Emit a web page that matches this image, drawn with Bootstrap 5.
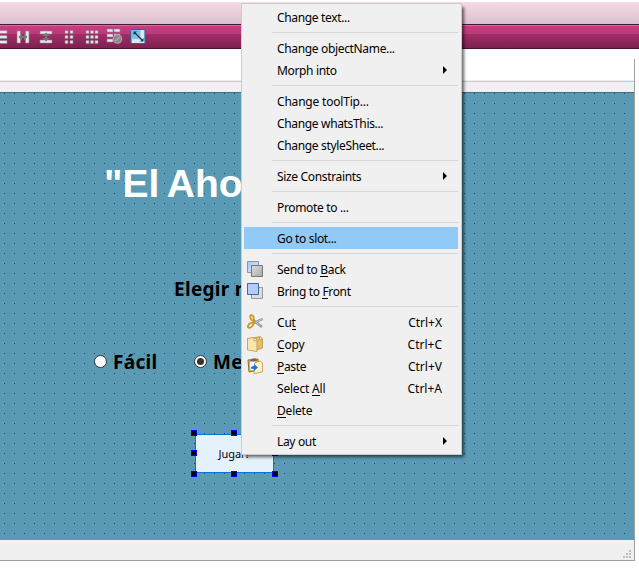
<!DOCTYPE html>
<html lang="es">
<head>
<meta charset="utf-8">
<title>Designer</title>
<link href="https://cdn.jsdelivr.net/npm/bootstrap@5.3.0/dist/css/bootstrap.min.css" rel="stylesheet">
<style>
body{width:639px;height:569px;background:#fff;font-family:"Noto Sans","Open Sans",sans-serif;color:#000}
.titlestrip{height:22px;margin-top:2px;background:linear-gradient(#f8d9e8,#d9c0cc)}
.toolstrip{height:25px;border-top:1px solid #431a30;border-bottom:1px solid #4c1232;background:linear-gradient(#d66ba1 0,#d66ba1 1px,#ca3c80 1px,#b83b79 9px,#a22e69 9px,#7e2150 100%)}
.toolstrip svg{display:block}
.mdi{width:635px;height:502px;margin-top:10px;border-right:1px solid #a0a0a0;border-bottom:1px solid #a0a0a0}
.doc-head{height:12px;margin-top:21px;background:linear-gradient(#f0f0f0 0 1px,#99d9f5 1px 2px,#f0f0f0 2px)}
.form-canvas{height:448px;border-top:1px solid #3c7186;background:#5a9ab4;overflow:hidden}
.status{height:20px;background:#f0f0f0}
.w{position:absolute;line-height:1;white-space:nowrap}
.big-title{left:104px;top:71px;font:bold 39px/1 "Liberation Sans",sans-serif;color:#fff;word-spacing:-2px}
.pick{left:174px;top:187px;font-size:19px;font-weight:700;letter-spacing:.3px}
.opt{top:260px;font-size:19px;font-weight:700;letter-spacing:.3px}
.dot{width:13px;height:13px;border-radius:50%;background:#fff;border:1px solid #333;top:262px}
.dot.on::after{content:"";position:absolute;inset:2px;border-radius:50%;background:#333}
.play{left:195px;top:341px;width:79px;height:39px;background:#e5f1fb;border:1px solid #0078d7;font-size:11px;padding-right:2px}
.handle{position:absolute;width:6px;height:6px;background:#000;border:1px solid #0000e8}
.ctx{position:absolute;left:241px;top:3px;width:221px;height:452px;background:#f0f0f0;border:1px solid #ccc;padding:2px 3px 2px 2px;box-shadow:3px 3px 3px -1px rgba(0,0,0,.6);font-size:12px}
.item{height:22px;line-height:24px;padding:0 16px 0 33px;position:relative;white-space:pre}
.item.hot{background:#91c9f7}
.item>svg{position:absolute;left:3px;top:3px}
.item>span:first-of-type{letter-spacing:-.34px}
.item .loose:first-of-type{letter-spacing:-.2px}
.item u{text-decoration:none;display:inline-block;position:relative;line-height:inherit}
.item u::after{content:"";position:absolute;left:0;right:0;top:18px;height:1px;background:#000}
.rule{height:9px;margin-left:28px;background:linear-gradient(#d7d7d7,#d7d7d7) 0 4px/100% 1px no-repeat}
.arrow{position:absolute;left:199px;top:7px;width:0;height:0;border:4px solid transparent;border-left:4px solid #000;border-right:0}
</style>
<script src="https://cdn.jsdelivr.net/npm/bootstrap@5.3.0/dist/js/bootstrap.bundle.min.js"></script>
</head>
<body class="m-0 overflow-hidden position-relative d-flex flex-column">
<div class="titlestrip flex-shrink-0"></div>
<div class="toolstrip flex-shrink-0">
<svg width="150" height="23" fill="#e9e6e7" stroke="#8f8190" stroke-width=".6">
<path d="M-5 5.500h12v3h-12zM-5 10.500h12v3h-12zM-5 15.500h12v3h-12z"/>
<path d="M17 6h3.500v12H17zM25.500 6H29v12h-3.500z"/><path d="M40 6h12v3H40zM40 15h12v3H40z"/>
<path fill="#777" stroke="none" d="M18.500 12l3.500-3.500V11h2V8.500l3.500 3.500-3.500 3.500V13h-2v2.500zM46 7.500l3.500 3.500H47v2h2.500L46 16.500 42.500 13H45v-2h-2.500z"/>
<path d="M65 5.500h3v3h-3zM70 5.500h3v3h-3zM65 10.500h3v3h-3zM70 10.500h3v3h-3zM65 15.500h3v3h-3zM70 15.500h3v3h-3zM86 5.500h3v3h-3zM90.500 5.500h3v3h-3zM95 5.500h3v3h-3zM86 10.500h3v3h-3zM90.500 10.500h3v3h-3zM95 10.500h3v3h-3zM86 15.500h3v3h-3zM90.500 15.500h3v3h-3zM95 15.500h3v3h-3z"/>
<path d="M107 4h6v3h-6zM114 4h6v3h-6zM107 9h6v3h-6zM114 9h6v3h-6zM107 14h6v3h-6z"/>
<circle cx="117.500" cy="14" r="4.200" fill="#8f858b" stroke="#aaa0a6" stroke-width="1.200"/><path d="M115.500 16l4-4" stroke="#c8c0c4" stroke-width="1"/>
<path d="M131 4.500h14v14h-14z" fill="#dce8ed" stroke="#236a9c" stroke-width="1.200"/><path d="M131.500 5h9v9h-9z" fill="#7dbfe0" stroke="none"/><path d="M140.500 5v9h-9" fill="none" stroke="#c3cdd2"/><path d="M135 8l7 7" stroke="#063a5c" stroke-width="1.200"/><path d="M133.500 6.500h3.500l-3.500 3.500zM143.500 16.500H140l3.500-3.500z" fill="#063a5c" stroke="none"/>
</svg>
</div>
<div class="mdi flex-shrink-0">
<div class="doc-head"></div>
<div class="form-canvas position-relative">
<svg class="position-absolute top-0 start-0" width="634" height="447"><defs><pattern id="dots" width="10" height="10" patternUnits="userSpaceOnUse"><path d="M4 0h1v1h-1z" fill="#1d4a5e"/></pattern></defs><rect width="634" height="447" fill="url(#dots)"/></svg>
<div class="w big-title">"El Aho</div>
<div class="w pick">Elegir n</div>
<span class="w dot" style="left:94px"></span><div class="w opt" style="left:113px">Fácil</div>
<span class="w dot on" style="left:194px"></span><div class="w opt" style="left:213px">Me</div>
<div class="w play d-flex align-items-center justify-content-center">Jugar!</div>
<i class="handle" style="left:191px;top:337px"></i><i class="handle" style="left:231px;top:337px"></i><i class="handle" style="left:272px;top:337px"></i>
<i class="handle" style="left:191px;top:357px"></i><i class="handle" style="left:272px;top:357px"></i>
<i class="handle" style="left:191px;top:378px"></i><i class="handle" style="left:231px;top:378px"></i><i class="handle" style="left:272px;top:378px"></i>
</div>
<div class="status d-flex justify-content-end align-items-end"><svg width="12" height="12" fill="#bfbfbf"><path d="M7 2h2v2H7zM4 5h2v2H4zM7 5h2v2H7zM1 8h2v2H1zM4 8h2v2H4zM7 8h2v2H7z"/></svg></div>
</div>
<div class="ctx">
<div class="item"><span>Change text...</span></div><div class="rule"></div>
<div class="item"><span>Change objectName...</span></div>
<div class="item"><span>Morph into</span><i class="arrow"></i></div><div class="rule"></div>
<div class="item"><span class="loose">Change toolTip...</span></div>
<div class="item"><span>Change whatsThis...</span></div>
<div class="item"><span>Change styleSheet...</span></div><div class="rule"></div>
<div class="item"><span>Size Constraints</span><i class="arrow"></i></div><div class="rule"></div>
<div class="item"><span>Promote to ...</span></div><div class="rule"></div>
<div class="item hot"><span>Go to slot...</span></div><div class="rule"></div>
<div class="item"><svg width="17" height="17"><defs><linearGradient id="bl" x2="1" y2="1"><stop stop-color="#a5c5f8"/><stop offset="1" stop-color="#dce9ff"/></linearGradient><linearGradient id="gr" x2="1" y2="1"><stop stop-color="#ddd"/><stop offset="1" stop-color="#aaa"/></linearGradient></defs><path d="M.5.500h11v11H.5z" fill="url(#bl)" stroke="#8996b0"/><path d="M4.500 4.500h11v11h-11z" fill="url(#gr)" stroke="#777"/></svg><span>Send to <u>B</u>ack</span></div>
<div class="item"><svg width="17" height="17"><path d="M4.500 4.500h11v11h-11z" fill="#ddd" stroke="#999"/><path d="M.5.500h11v11H.5z" fill="#b0ccfa" stroke="#4d6494"/></svg><span>Bring to <u>F</u>ront</span></div><div class="rule"></div>
<div class="item d-flex justify-content-between"><svg width="17" height="17" fill="none"><path d="M15.500 5L6 9.500M6 6l9 7" stroke="#888" stroke-width="2.400"/><path d="M15 5.300L6 9.500M6 6l8.500 6.700" stroke="#ccc"/><path d="M4 1c3 0 3 4 3 6-3 0-5-5-3-6zM2 10c3-2 5-1 4 1-1 3-6 4-5 1zM7 7l1 2" stroke="#c99a20" stroke-width="1.800"/></svg><span class="loose">Cu<u>t</u></span><span>Ctrl+X</span></div>
<div class="item d-flex justify-content-between"><svg width="17" height="17" stroke="#b99545" stroke-width=".8"><path d="M6 2l7-1.500 2.500 2v9.500l-6 2H6z" fill="#e2bf6e"/><path d="M.5 2.500l6.500-1 3 2v12l-9.500-1.500z" fill="#fae6aa"/><path d="M7 1.800v3h3M12.500.800v2.500h3" fill="#fff4cf"/></svg><span class="loose"><u>C</u>opy</span><span>Ctrl+C</span></div>
<div class="item d-flex justify-content-between"><svg width="17" height="17"><path d="M1 2l10-1 1 11-10 2z" fill="#dfb53d" stroke="#967018"/><path d="M3 3l2-2.500h4l1 2.500z" fill="#666"/><path d="M3 4h5v8H3z" fill="#f5f5f5"/><path d="M7.500 5l5.500-2 2.500 2v9L7 15.500z" fill="#fff1c5" stroke="#b99545" stroke-width=".8"/><path d="M3.500 10.500Q4 8 7 8V6l4 3.500-4 3.500v-2z" fill="#1d78c8"/></svg><span><u>P</u>aste</span><span>Ctrl+V</span></div>
<div class="item d-flex justify-content-between"><span class="loose">Select <u>A</u>ll</span><span>Ctrl+A</span></div>
<div class="item"><span class="loose"><u>D</u>elete</span></div><div class="rule"></div>
<div class="item"><span>Lay out</span><i class="arrow"></i></div>
</div>
</body>
</html>
